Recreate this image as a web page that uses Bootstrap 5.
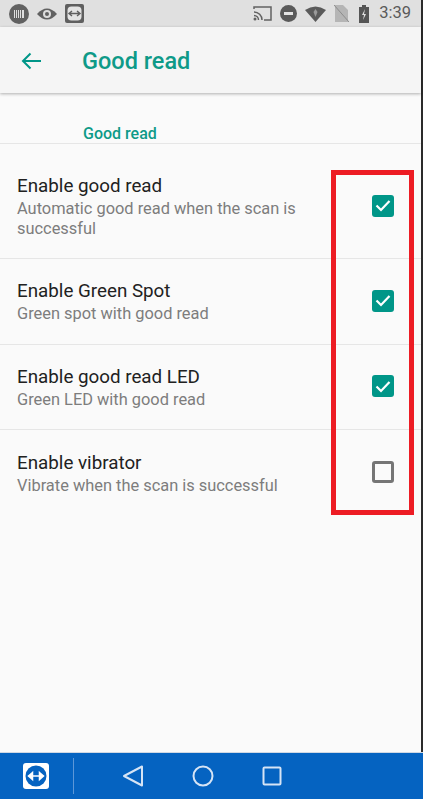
<!DOCTYPE html>
<html lang="en">
<head>
  <meta charset="UTF-8" />
  <meta name="viewport" content="width=device-width, initial-scale=1" />
  <title>Good read</title>
  <link href="https://cdn.jsdelivr.net/npm/bootstrap@5.3.3/dist/css/bootstrap.min.css" rel="stylesheet" />
  <style>
    html, body { height: 100%; }
    body {
      margin: 0;
      background: #fafafa;
      font-family: Roboto, "Liberation Sans", sans-serif;
      overflow: hidden;
    }
    .screen {
      position: relative;
      width: 423px;
      height: 799px;
      background: #fafafa;
      border-right: 2px solid #2b2b2b;
    }
    .status-bar {
      height: 27px;
      background: #e0e0e0;
      color: #555;
      padding: 0 10px 0 9px;
    }
    .st-left { margin-left: 8px; }
    .st-gap { margin-left: 8px; }
    .st-wide { margin-left: 10px; }
    .clock { color: #5a5a5a; font-size: 16.5px; }
    .tool-bar {
      height: 66px;
      background: #f5f5f5;
      box-shadow: 0 1px 3px rgba(0, 0, 0, .3);
      padding: 2px 0 0 21px;
    }
    .tool-title { margin: 2px 0 0 41px; font-size: 23.5px; font-weight: 500; color: #0e9a88; }
    .section-label {
      padding: 32px 0 0 83px;
      height: 51px;
      font-size: 16px;
      font-weight: 500;
      line-height: 18px;
      color: #0e9a88;
      border-bottom: 1px solid #e6e6e6;
    }
    .pref-row {
      background: transparent;
      border-color: #e6e6e6;
      padding: 2px 27px 0 17px;
    }
    .pref-row.tall { height: 115px; padding-top: 12px; }
    .pref-row.short { height: 85.5px; }
    .pref-title { font-size: 18.8px; line-height: 22px; color: #212121; }
    .pref-sub { font-size: 16.4px; line-height: 20px; color: #7d7d7d; margin-top: 2px; width: 300px; }
    .tick {
      width: 22px;
      height: 22px;
      flex: none;
      border-radius: 3px;
      background: #009688;
      margin-bottom: 3px;
    }
    .tick.off { background: transparent; border: 3px solid #757575; }
    .red-frame {
      position: absolute;
      left: 331px;
      top: 170px;
      width: 83px;
      height: 345px;
      border: 5px solid #ed1c24;
    }
    .nav-strip {
      position: absolute;
      left: 0;
      right: -2px;
      bottom: 0;
      height: 47px;
      background: #0563c1;
      border-top: 1px solid #d0d8e4;
    }
    .tv-wrap { width: 74px; height: 36px; border-right: 1px solid #5c97d8; padding-left: 23px; }
    .nav-icons { gap: 48px; padding-left: 48px; }
  </style>
</head>
<body>
  <div class="screen d-flex flex-column">
    <div class="status-bar d-flex align-items-center justify-content-between">
      <div class="d-flex align-items-center">
        <svg width="20" height="20" viewBox="0 0 20 20"><circle cx="10" cy="10" r="10" fill="#616161"/><path d="M5 6h10v8H5z" fill="#ddd"/><path d="M6.500 6v8M8.500 6v8M10.500 6v8M12.500 6v8" stroke="#616161" stroke-width="1"/></svg>
        <svg class="st-left" width="20" height="14" viewBox="0 0 20 14"><path d="M0 7Q10-4 20 7 10 18 0 7z" fill="#616161"/><circle cx="10" cy="7" r="4" fill="#ddd"/><circle cx="10" cy="7" r="2" fill="#616161"/></svg>
        <svg class="st-left" width="19" height="19" viewBox="0 0 19 19"><rect width="19" height="19" rx="2" fill="#5f5f5f"/><rect x="2.500" y="2.500" width="14" height="14" rx="4" fill="#e4e4e4"/><path d="M4 9.500h11M7 7l-3 2.500L7 12M12 7l3 2.500L12 12" fill="none" stroke="#5f5f5f" stroke-width="1.400"/></svg>
      </div>
      <div class="d-flex align-items-center">
        <svg width="19" height="15" viewBox="0 0 19 15"><path d="M1 3V1h17v13h-7" fill="none" stroke="#616161" stroke-width="1.500"/><path d="M1 6a8 8 0 0 1 8 8M1 9.500A4.500 4.500 0 0 1 5.500 14" fill="none" stroke="#616161" stroke-width="1.500"/><circle cx="2" cy="13" r="1.500" fill="#616161"/></svg>
        <svg class="st-gap" width="17" height="17" viewBox="0 0 17 17"><circle cx="8.500" cy="8.500" r="8.500" fill="#5a5a5a"/><rect x="4" y="7" width="9" height="3" fill="#e4e4e4"/></svg>
        <svg class="st-gap" width="21" height="16" viewBox="0 0 21 16"><path d="M0 4Q10.500-3 21 4L10.500 16z" fill="#5a5a5a"/><path d="M10.500 3l2 3-2 5-2-5z" fill="#9a9a9a"/></svg>
        <svg class="st-gap" width="15" height="17" viewBox="0 0 15 17"><path d="M1 0h8l5 5v12H1z" fill="#b5b5b5"/><path d="M0 0l15 17" stroke="#8c8c8c" stroke-width="1"/></svg>
        <svg class="st-wide" width="10" height="18" viewBox="0 0 10 18"><path d="M3 0h4v2h3v16H0V2h3z" fill="#555"/><path d="M6 4L3 10h2l-1 5 3-6H5z" fill="#e0e0e0"/></svg>
        <span class="clock st-wide">3:39</span>
      </div>
    </div>

    <div class="tool-bar d-flex align-items-center">
      <svg width="20" height="18" viewBox="0 0 20 18"><path d="M20 9H2M9.500 1.500L2 9l7.500 7.500" fill="none" stroke="#009688" stroke-width="2"/></svg>
      <span class="tool-title">Good read</span>
    </div>

    <div class="section-label">Good read</div>

    <ul class="list-group list-group-flush">
      <li class="list-group-item pref-row tall d-flex align-items-center justify-content-between">
        <div>
          <div class="pref-title">Enable good read</div>
          <div class="pref-sub">Automatic good read when the scan is successful</div>
        </div>
        <span class="tick d-flex align-items-center justify-content-center">
          <svg width="16" height="13" viewBox="0 0 16 13"><path d="M1.500 6.500l4.500 4.500 8.500-9" fill="none" stroke="#fff" stroke-width="2.200"/></svg>
        </span>
      </li>
      <li class="list-group-item pref-row short d-flex align-items-center justify-content-between">
        <div>
          <div class="pref-title">Enable Green Spot</div>
          <div class="pref-sub">Green spot with good read</div>
        </div>
        <span class="tick d-flex align-items-center justify-content-center">
          <svg width="16" height="13" viewBox="0 0 16 13"><path d="M1.500 6.500l4.500 4.500 8.500-9" fill="none" stroke="#fff" stroke-width="2.200"/></svg>
        </span>
      </li>
      <li class="list-group-item pref-row short d-flex align-items-center justify-content-between">
        <div>
          <div class="pref-title">Enable good read LED</div>
          <div class="pref-sub">Green LED with good read</div>
        </div>
        <span class="tick d-flex align-items-center justify-content-center">
          <svg width="16" height="13" viewBox="0 0 16 13"><path d="M1.500 6.500l4.500 4.500 8.500-9" fill="none" stroke="#fff" stroke-width="2.200"/></svg>
        </span>
      </li>
      <li class="list-group-item pref-row short d-flex align-items-center justify-content-between">
        <div>
          <div class="pref-title">Enable vibrator</div>
          <div class="pref-sub">Vibrate when the scan is successful</div>
        </div>
        <span class="tick off"></span>
      </li>
    </ul>

    <div class="red-frame"></div>

    <div class="nav-strip d-flex align-items-center">
      <div class="tv-wrap d-flex align-items-center">
        <svg width="26" height="26" viewBox="0 0 26 26"><rect width="26" height="26" rx="3" fill="#fff"/><circle cx="13" cy="13" r="10.500" fill="#0563c1"/><path d="M5 13h16M9.500 9.500L5.500 13l4 3.500zM16.500 9.500l4 3.500-4 3.500z" fill="#fff" stroke="#fff" stroke-width="1.500"/></svg>
      </div>
      <div class="nav-icons d-flex align-items-center">
        <svg width="22" height="22" viewBox="0 0 22 22"><path d="M20 1.500v19L2 11z" fill="none" stroke="#d6e4f5" stroke-width="2" stroke-linejoin="round"/></svg>
        <svg width="22" height="22" viewBox="0 0 22 22"><circle cx="11" cy="11" r="9.500" fill="none" stroke="#d6e4f5" stroke-width="2"/></svg>
        <svg width="20" height="20" viewBox="0 0 20 20"><rect x="1.500" y="1.500" width="17" height="17" rx="1" fill="none" stroke="#d6e4f5" stroke-width="2"/></svg>
      </div>
    </div>
  </div>
  <script src="https://cdn.jsdelivr.net/npm/bootstrap@5.3.3/dist/js/bootstrap.bundle.min.js"></script>
</body>
</html>
